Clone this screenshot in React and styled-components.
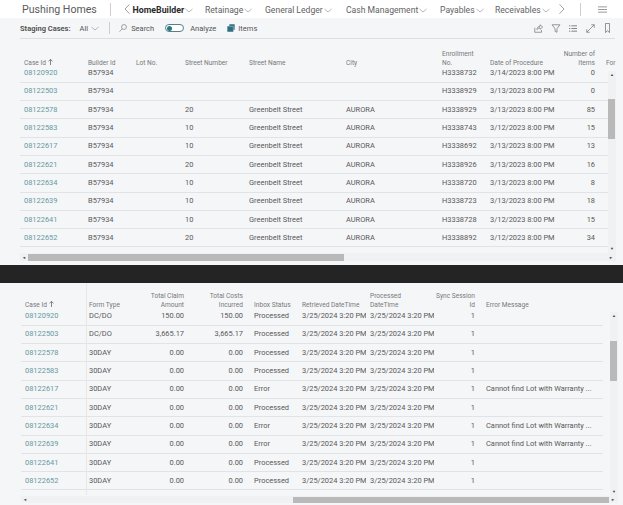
import React from "react";
import styled, { createGlobalStyle } from "styled-components";

const Global = createGlobalStyle`
  html, body { margin: 0; padding: 0; background: #f5f6f8; }
  body { font-family: Roboto, "Open Sans", sans-serif; color: #555; overflow: hidden; }
`;

const Page = styled.div`
  width: 623px;
  height: 505px;
  display: flex;
  flex-direction: column;
  overflow: hidden;
`;

const TopBar = styled.div`
  height: 18px;
  background: #fff;
  display: flex;
  align-items: center;
  padding-left: 22px;
  flex: none;
`;

const Company = styled.div`
  font-size: 10.6px;
  color: #5a5a5a;
  width: 88px;
  flex: none;
`;

const Divider = styled.div`
  width: 1px;
  height: ${(p) => p.$h || 12}px;
  background: #cfcfcf;
  flex: none;
`;

const NavBack = styled.span`
  width: 21.5px;
  display: flex;
  justify-content: flex-end;
  padding-right: 3px;
  box-sizing: border-box;
  flex: none;
`;

const NavItem = styled.div`
  display: flex;
  align-items: center;
  gap: 1px;
  width: ${(p) => p.$w}px;
  margin-top: 2px;
  flex: none;
  font-size: ${(p) => (p.$active ? "8.8px" : "8.6px")};
  font-weight: ${(p) => (p.$active ? 700 : 400)};
  color: ${(p) => (p.$active ? "#2a2a2a" : "#626262")};
  white-space: nowrap;
`;

const NavEnd = styled.div`
  display: flex;
  align-items: center;
  margin-left: 15px;
  gap: 17px;
`;

const Toolbar = styled.div`
  height: 21px;
  margin: 0 8px 0 20px;
  border-bottom: 1px solid #dcdfe2;
  box-sizing: border-box;
  display: flex;
  align-items: center;
  font-size: 7.5px;
  color: #555;
  flex: none;
`;

const ToolText = styled.span`
  font-weight: ${(p) => (p.$bold ? 700 : 400)};
  margin-right: ${(p) => p.$gap || 0}px;
  white-space: nowrap;
`;

const ToolDivider = styled.span`
  display: flex;
  margin: 0 9px 0 10px;
`;

const Toggle = styled.div`
  width: 19px;
  height: 8px;
  border: 1px solid #5c7f86;
  border-radius: 6px;
  background: #fff;
  box-sizing: border-box;
  padding: 0.5px 1px;
  margin-right: 6px;
  &::before {
    content: "";
    display: block;
    width: 5px;
    height: 5px;
    border-radius: 50%;
    background: #2a7a85;
  }
`;

const ActionIcons = styled.div`
  margin-left: auto;
  display: flex;
  align-items: center;
  padding-right: 5px;
`;

const Panel = styled.div`
  position: relative;
  height: ${(p) => p.$h}px;
  flex: none;
  display: grid;
  grid-template-columns: 1fr 8px;
  grid-template-rows: 1fr ${(p) => p.$bar}px;
  padding: ${(p) => p.$pad};
  box-sizing: border-box;
  overflow: hidden;
`;

const Frame = styled.div`
  min-width: 0;
  min-height: 0;
  display: flex;
  flex-direction: column;
  padding-right: ${(p) => p.$inset || 0}px;
`;

const HeadRow = styled.div`
  display: grid;
  grid-template-columns: ${(p) => p.$cols};
  align-items: end;
  height: ${(p) => p.$h}px;
  margin-bottom: ${(p) => p.$pull}px;
  flex: none;
`;

const Row = styled.div`
  display: grid;
  grid-template-columns: ${(p) => p.$cols};
  align-items: center;
  height: 18.3px;
  box-sizing: border-box;
  border-bottom: 1px solid #e1e3e6;
  flex: none;
`;

const HeadCell = styled.div`
  font-size: 6.6px;
  line-height: 8.4px;
  color: #787878;
  text-align: ${(p) => (p.$right ? "right" : "left")};
  padding: ${(p) => (p.$right ? "0 7px 0 0" : "0 0 0 4px")};
  white-space: pre;
`;

const SortArrow = styled.svg`
  width: 5px;
  height: 6px;
  margin-left: 2px;
  vertical-align: -0.5px;
`;

const Cell = styled.div`
  font-size: 7.45px;
  line-height: 10px;
  color: ${(p) => (p.$link ? "#669a9f" : "#585858")};
  text-align: ${(p) => (p.$right ? "right" : "left")};
  padding: ${(p) => (p.$right ? "0 7px 0 0" : "0 0 0 4px")};
  white-space: nowrap;
  overflow: hidden;
`;

const VTrack = styled.div`
  background: #f0f1f2;
  display: flex;
  flex-direction: column;
  align-items: center;
  position: relative;
  justify-content: space-between;
  font-size: 4px;
  line-height: 8px;
  color: #444;
  margin-top: ${(p) => p.$top}px;
`;

const Thumb = styled.div`
  position: absolute;
  left: 0;
  right: 1px;
  background: #b9b9b9;
  top: ${(p) => p.$top}px;
  height: 40px;
`;

const HTrack = styled.div`
  grid-column: 1 / -1;
  background: #f0f1f2;
  position: relative;
  font-size: 4px;
  color: #444;
  display: flex;
  align-items: center;
  justify-content: space-between;
  padding: 0 3px 0 2px;
`;

const HThumb = styled.div`
  position: absolute;
  top: 1px;
  bottom: 0;
  background: #b9b9b9;
  left: ${(p) => p.$left}px;
  width: ${(p) => p.$w}px;
`;

const BlackBar = styled.div`
  height: 18px;
  background: #242424;
  flex: none;
`;

const FrozenLine = styled.div`
  position: absolute;
  left: 85.5px;
  top: 0;
  bottom: 10px;
  width: 1.5px;
  background: #e6e8ea;
`;

const Chev = ({ dir = "down" }) => {
  if (dir === "down") {
    return (
      <svg width="8" height="5" viewBox="0 0 16 10" fill="none" stroke="#999" strokeWidth="1.4" style={{ flex: "none" }}>
        <path d="M1 2l7 6 7-6" />
      </svg>
    );
  }
  return (
    <svg width="6" height="10" viewBox="0 0 6 10" fill="none" stroke="#888" strokeWidth="0.8" style={{ flex: "none" }}>
      <path d={dir === "left" ? "M5.5 0.3L1 5l4.5 4.7" : "M0.5 0.3L5 5 .5 9.7"} />
    </svg>
  );
};

const Ico = ({ children, w = 9, h = 9, mr = 0, box = "0 0 12 12" }) => (
  <svg width={w} height={h} viewBox={box} fill="none" stroke="#7a7a7a" strokeWidth="1" style={{ marginRight: mr, flex: "none" }}>
    {children}
  </svg>
);

const topCols = "64px 48px 49px 64px 97px 96px 48px 77px 39px 20px";
const botCols = "64px 40px 66px 59px 48px 68px 68px 48px 121px";

const topHead = [
  ["Case Id", false, true], ["Builder Id"], ["Lot No."], ["Street Number"], ["Street Name"], ["City"],
  ["Enrollment\nNo."], ["Date of Procedure"], ["Number of\nItems", true], ["For"],
];

const topRows = [
  ["08120920", "", "", "", "H3338732", "3/14/2023 8:00 PM", "0"],
  ["08122503", "", "", "", "H3338929", "3/13/2023 8:00 PM", "0"],
  ["08122578", "20", "Greenbelt Street", "AURORA", "H3338929", "3/13/2023 8:00 PM", "85"],
  ["08122583", "10", "Greenbelt Street", "AURORA", "H3338743", "3/12/2023 8:00 PM", "15"],
  ["08122617", "10", "Greenbelt Street", "AURORA", "H3338692", "3/13/2023 8:00 PM", "13"],
  ["08122621", "20", "Greenbelt Street", "AURORA", "H3338926", "3/13/2023 8:00 PM", "16"],
  ["08122634", "10", "Greenbelt Street", "AURORA", "H3338720", "3/13/2023 8:00 PM", "8"],
  ["08122639", "10", "Greenbelt Street", "AURORA", "H3338723", "3/13/2023 8:00 PM", "18"],
  ["08122641", "10", "Greenbelt Street", "AURORA", "H3338728", "3/12/2023 8:00 PM", "15"],
  ["08122652", "20", "Greenbelt Street", "AURORA", "H3338892", "3/12/2023 8:00 PM", "34"],
];

const botHead = [
  ["Case Id", false, true], ["Form Type"], ["Total Claim\nAmount", true], ["Total Costs\nIncurred", true],
  ["Inbox Status"], ["Retrieved DateTime"], ["Processed\nDateTime"], ["Sync Session\nId", true], ["Error Message"],
];

const warn = "Cannot find Lot with Warranty ...";
const botRows = [
  ["08120920", "DC/DO", "150.00", "150.00", "Processed", ""],
  ["08122503", "DC/DO", "3,665.17", "3,665.17", "Processed", ""],
  ["08122578", "30DAY", "0.00", "0.00", "Processed", ""],
  ["08122583", "30DAY", "0.00", "0.00", "Processed", ""],
  ["08122617", "30DAY", "0.00", "0.00", "Error", warn],
  ["08122621", "30DAY", "0.00", "0.00", "Processed", ""],
  ["08122634", "30DAY", "0.00", "0.00", "Error", warn],
  ["08122639", "30DAY", "0.00", "0.00", "Error", warn],
  ["08122641", "30DAY", "0.00", "0.00", "Processed", ""],
  ["08122652", "30DAY", "0.00", "0.00", "Processed", ""],
];

const Head = ({ cols, items, h, pull }) => (
  <HeadRow $h={h} $pull={pull} $cols={cols}>
    {items.map(([t, right, sorted]) => (
      <HeadCell key={t} $right={right}>
        {t}
        {sorted && (
          <SortArrow viewBox="0 0 10 12" fill="none" stroke="#555" strokeWidth="1.4">
            <path d="M5 12V1M1 4.5L5 1l4 3.5" />
          </SortArrow>
        )}
      </HeadCell>
    ))}
  </HeadRow>
);

const VBar = ({ top, thumbTop }) => (
  <VTrack $top={top}>
    <span>▲</span>
    <Thumb $top={thumbTop} />
    <span>▼</span>
  </VTrack>
);

const HBar = ({ left, w }) => (
  <HTrack>
    <span>◄</span>
    <HThumb $left={left} $w={w} />
    <span>►</span>
  </HTrack>
);

const navItems = [
  ["Retainage", 60],
  ["General Ledger", 81],
  ["Cash Management", 94],
  ["Payables", 55],
  ["Receivables", 64],
];

export default function App() {
  return (
    <Page>
      <Global />
      <TopBar>
        <Company>Pushing Homes</Company>
        <Divider $h={13} />
        <NavBack><Chev dir="left" /></NavBack>
        <NavItem $active $w={72.5}>HomeBuilder<Chev /></NavItem>
        {navItems.map(([name, w]) => (
          <NavItem key={name} $w={w}>{name}<Chev /></NavItem>
        ))}
        <Chev dir="right" />
        <NavEnd>
          <Divider $h={13} />
          <Ico w={9} h={7} box="0 0 12 9"><path d="M0 1h12M0 4.5h12M0 8h12" /></Ico>
        </NavEnd>
      </TopBar>
      <Toolbar>
        <ToolText $bold $gap={9}>Staging Cases:</ToolText>
        <ToolText $gap={3}>All</ToolText>
        <Chev />
        <ToolDivider><Divider $h={12} /></ToolDivider>
        <Ico w={8} h={8} mr={4}><circle cx="7.5" cy="4.5" r="3.7" /><path d="M4.8 7.2L.8 11.5" /></Ico>
        <ToolText $gap={11}>Search</ToolText>
        <Toggle />
        <ToolText $gap={11}>Analyze</ToolText>
        <svg width="8" height="8" viewBox="0 0 12 12" style={{ marginRight: 3, flex: "none" }}>
          <path d="M3.5 0.5h8v8H9.5v3h-9v-8h3z" fill="#2f6f80" />
          <path d="M3.5 3.5h6v5" fill="none" stroke="#bcd2d6" strokeWidth="0.8" />
        </svg>
        <ToolText>Items</ToolText>
        <ActionIcons>
          <Ico mr={8}><path d="M1 5v6h9V8M4 7.5c0-3 2-4.5 4-4.5V1l3.5 3L8 7V5.2C6 5.2 5 6 4 7.5z" /></Ico>
          <Ico w={10} h={9} mr={8}><path d="M.8 1h10.4L7.3 6.3V11L4.7 9.8V6.3z" /></Ico>
          <Ico w={8} h={7} mr={9} box="0 0 12 10"><path d="M0 1h2M0 5h2M0 9h2M3.5 1H12M3.5 5H12M3.5 9H12" strokeWidth="1.4" /></Ico>
          <Ico mr={10}><path d="M1 11L11 1M7 1h4v4M1 7v4h4" /></Ico>
          <Ico w={5} h={10} box="0 0 6 12"><path d="M.5.5h5v11L3 9.3.5 11.5z" /></Ico>
        </ActionIcons>
      </Toolbar>
      <Panel $h={226} $bar={8} $pad="0 7px 4px 20px">
        <Frame>
          <Head cols={topCols} items={topHead} h={28} pull={-2.5} />
          {topRows.map((r) => (
            <Row key={r[0]} $cols={topCols}>
              <Cell $link>{r[0]}</Cell>
              <Cell>B57934</Cell>
              <Cell />
              <Cell>{r[1]}</Cell>
              <Cell>{r[2]}</Cell>
              <Cell>{r[3]}</Cell>
              <Cell>{r[4]}</Cell>
              <Cell>{r[5]}</Cell>
              <Cell $right>{r[6]}</Cell>
              <Cell />
            </Row>
          ))}
        </Frame>
        <VBar top={32} thumbTop={28} />
        <HBar left={8} w={316} />
      </Panel>
      <BlackBar />
      <Panel $h={222} $bar={7} $pad="0 5px 2px 21px">
        <FrozenLine />
        <Frame $inset={7}>
          <Head cols={botCols} items={botHead} h={26} pull={-1.5} />
          {botRows.map((r) => (
            <Row key={r[0]} $cols={botCols}>
              <Cell $link>{r[0]}</Cell>
              <Cell>{r[1]}</Cell>
              <Cell $right>{r[2]}</Cell>
              <Cell $right>{r[3]}</Cell>
              <Cell>{r[4]}</Cell>
              <Cell>3/25/2024 3:20 PM</Cell>
              <Cell>3/25/2024 3:20 PM</Cell>
              <Cell $right>1</Cell>
              <Cell>{r[5]}</Cell>
            </Row>
          ))}
        </Frame>
        <VBar top={29} thumbTop={29} />
        <HBar left={272} w={316} />
      </Panel>
    </Page>
  );
}
